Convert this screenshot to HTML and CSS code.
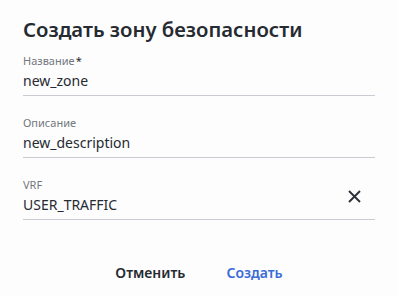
FILE: index.html
```html
<!DOCTYPE html>
<html lang="ru">
<head>
    <meta charset="UTF-8">
    <title>Создать зону безопасности</title>
    <link rel="stylesheet" href="styles.css">
</head>
<body>
    <div class="dialog">
        <h1>Создать зону безопасности</h1>
        <div class="field">
            <div class="field-main">
                <label>Название<span class="req">*</span></label>
                <div class="value">new_zone</div>
            </div>
        </div>
        <div class="field">
            <div class="field-main">
                <label>Описание</label>
                <div class="value">new_description</div>
            </div>
        </div>
        <div class="field">
            <div class="field-main">
                <label>VRF</label>
                <div class="value">USER_TRAFFIC</div>
            </div>
            <svg class="clear" width="13" height="13" viewBox="0 0 13 13">
                <path d="M1 1 L12 12 M12 1 L1 12" stroke="#2b3038" stroke-width="1.9" fill="none"/>
            </svg>
        </div>
        <div class="actions">
            <button class="btn">Отменить</button>
            <button class="btn primary">Создать</button>
        </div>
    </div>
</body>
</html>
```

FILE: styles.css
```css
body {
    margin: 0;
    background-color: #fdfdfd;
    font-family: "Noto Sans", "Open Sans", sans-serif;
    color: #262a31;
}

.dialog {
    padding: 15px 23px 0 23px;
}

h1 {
    margin: 0 0 10px 0;
    font-size: 20.3px;
    font-weight: 600;
    line-height: 28px;
    color: #262a31;
}

.field {
    display: flex;
    align-items: center;
    border-bottom: 1px solid #c8cad4;
    margin-bottom: 19px;
    padding-bottom: 4px;
}

.field-main {
    flex: 1;
}

.field label {
    display: block;
    font-size: 11px;
    line-height: 16px;
    color: #737780;
}

.req {
    color: #262a31;
    margin-left: 1px;
}

.value {
    margin-top: 2px;
    font-size: 14px;
    line-height: 20px;
}

.clear {
    margin-right: 14px;
}

.actions {
    display: flex;
    justify-content: center;
    gap: 41px;
    margin-top: 43px;
}

.btn {
    background: none;
    border: none;
    padding: 0;
    font-family: inherit;
    font-size: 14px;
    line-height: 20px;
    font-weight: 600;
    color: #262a31;
}

.primary {
    color: #3a6cd6;
}
```
